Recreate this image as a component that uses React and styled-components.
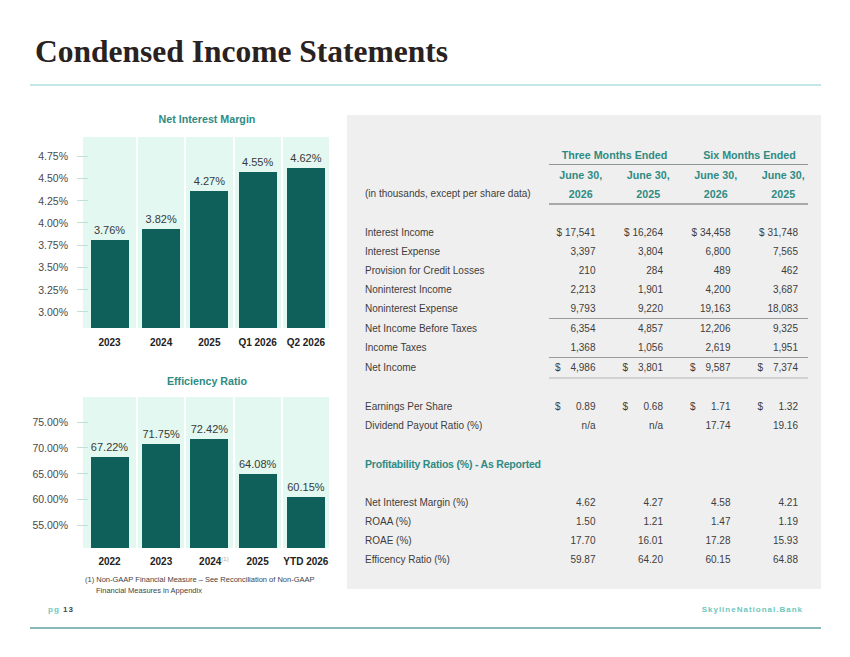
import React from 'react';
import styled, { createGlobalStyle } from 'styled-components';

const GlobalStyle = createGlobalStyle`
  html, body {
    margin: 0;
    padding: 0;
    background: #ffffff;
  }
  body {
    font-family: "Liberation Sans", Arial, sans-serif;
  }
`;

const TEAL = '#2e8b83';

// Page frame
const Page = styled.div`
  width: 850px;
  height: 657px;
  display: flex;
  flex-direction: column;
  overflow: hidden;
  background: #ffffff;
`;

const Title = styled.h1`
  margin: 0;
  padding: 36px 0 0 35px;
  font-family: "Liberation Serif", "Times New Roman", serif;
  font-weight: 700;
  font-size: 31.5px;
  line-height: 31px;
  color: #2a2121;
`;

const Rule = styled.div`
  height: 2px;
  margin: ${(p) => p.$mt}px 29px 0 30px;
  background: ${(p) => p.$color};
`;

const Body = styled.div`
  display: flex;
  gap: 18px;
  height: 484px;
  margin-top: 26px;
  padding-left: 25px;
`;

// Charts
const ChartColumn = styled.div`
  width: 304px;
  display: flex;
  flex-direction: column;
`;

const ChartTitle = styled.div`
  margin-top: ${(p) => p.$mt}px;
  padding-left: 60px;
  text-align: center;
  font-weight: 700;
  font-size: 10.7px;
  line-height: 14px;
  color: ${TEAL};
`;

const ChartRow = styled.div`
  display: flex;
  height: ${(p) => p.$h}px;
  margin-top: ${(p) => p.$mt}px;
`;

const Axis = styled.div`
  width: 58px;
  box-sizing: border-box;
  display: flex;
  flex-direction: column;
  justify-content: space-between;
  padding: ${(p) => p.$pt}px 0 ${(p) => p.$pb}px;
`;

const AxisLabel = styled.div`
  display: flex;
  align-items: center;
  justify-content: flex-end;
  height: 12px;
  font-size: 10.5px;
  color: #4a4a4a;

  &::after {
    content: '';
    position: relative;
    z-index: 1;
    width: 11px;
    height: 1px;
    margin: 0 -5px 0 9px;
    background: #c2e0d6;
  }
`;

const Plot = styled.div`
  flex: 1;
  display: grid;
  grid-template-columns: 53px repeat(4, 1fr);
  column-gap: 2px;
`;

const BarSlot = styled.div`
  display: flex;
  flex-direction: column;
  align-items: center;
  justify-content: flex-end;
  background: #e2f8f0;
`;

const BarValue = styled.span`
  margin-bottom: 3px;
  font-size: 11px;
  line-height: 13px;
  color: #3a3a3a;
`;

const Bar = styled.div`
  width: 38px;
  height: ${(p) => p.$h}px;
  background: #0f5f5a;
`;

const XLabels = styled.div`
  display: grid;
  grid-template-columns: 53px repeat(4, 1fr);
  column-gap: 2px;
  margin: ${(p) => p.$mt}px 0 0 58px;
`;

const XLabel = styled.div`
  text-align: center;
  white-space: nowrap;
  font-weight: 700;
  font-size: 10px;
  line-height: 14px;
  color: #222222;
`;

const Note = styled.sup`
  margin-right: -9px;
  font-weight: 400;
  font-size: 6px;
  line-height: 0;
  color: #a8a8a8;
`;

const Footnote = styled.div`
  margin-top: 5px;
  padding-left: 71px;
  text-indent: -11px;
  font-size: 7.5px;
  line-height: 11px;
  color: #444444;
`;

// Table panel
const Panel = styled.div`
  width: 474px;
  height: 474px;
  box-sizing: border-box;
  margin-top: 3px;
  padding: 31px 4px 0 18px;
  background: #f0efef;
`;

const Row = styled.div`
  display: grid;
  grid-template-columns: 182px repeat(4, 67.5px);
  align-items: center;
  height: ${(p) => p.$h || 19}px;
  margin-top: ${(p) => p.$mt || 0}px;
  font-size: 10px;
  color: #3d3d3d;
  white-space: nowrap;
`;

const Line = styled.div`
  width: 259px;
  height: ${(p) => p.$w}px;
  margin-left: 184px;
  background: ${(p) => p.$color};
`;

const Head = styled.div`
  grid-column: span ${(p) => p.$span || 1};
  text-align: center;
  font-weight: 700;
  font-size: 10.7px;
  color: ${TEAL};
`;

const Cell = styled.div`
  text-align: right;
  padding-right: 19px;
`;

const MoneyCell = styled(Cell)`
  display: flex;
  justify-content: space-between;
  padding-left: 8px;
`;

const Section = styled.div`
  grid-column: span 5;
  font-weight: 700;
  font-size: 10.5px;
  letter-spacing: -0.2px;
  color: ${TEAL};
`;

// Footer
const Footer = styled.div`
  display: flex;
  justify-content: space-between;
  margin-top: 9px;
  padding: 0 47px 0 48px;
  font-weight: 700;
  font-size: 8px;
  line-height: 10px;
  letter-spacing: 1px;
  color: #6cc8c0;
`;

const PageNo = styled.span`
  color: #3f4a4a;
`;

const nim = [
  ['2023', '3.76%', 88],
  ['2024', '3.82%', 99],
  ['2025', '4.27%', 137],
  ['Q1 2026', '4.55%', 156],
  ['Q2 2026', '4.62%', 160],
];

const eff = [
  ['2022', '67.22%', 91],
  ['2023', '71.75%', 104],
  ['2024', '72.42%', 109, true],
  ['2025', '64.08%', 74],
  ['YTD 2026', '60.15%', 51],
];

const Chart = ({ title, titleTop, rowTop, height, ticks, pt, pb, labelTop, data }) => (
  <>
    <ChartTitle $mt={titleTop}>{title}</ChartTitle>
    <ChartRow $mt={rowTop} $h={height}>
      <Axis $pt={pt} $pb={pb}>
        {ticks.map((t) => (
          <AxisLabel key={t}>{t}</AxisLabel>
        ))}
      </Axis>
      <Plot>
        {data.map(([label, value, h]) => (
          <BarSlot key={label}>
            <BarValue>{value}</BarValue>
            <Bar $h={h} />
          </BarSlot>
        ))}
      </Plot>
    </ChartRow>
    <XLabels $mt={labelTop}>
      {data.map(([label, , , note]) => (
        <XLabel key={label}>
          {label}
          {note && <Note>(1)</Note>}
        </XLabel>
      ))}
    </XLabels>
  </>
);

const topRows = [
  ['Interest Expense', '3,397', '3,804', '6,800', '7,565'],
  ['Provision for Credit Losses', '210', '284', '489', '462'],
  ['Noninterest Income', '2,213', '1,901', '4,200', '3,687'],
  ['Noninterest Expense', '9,793', '9,220', '19,163', '18,083'],
];

const midRows = [
  ['Net Income Before Taxes', '6,354', '4,857', '12,206', '9,325'],
  ['Income Taxes', '1,368', '1,056', '2,619', '1,951'],
];

const ratioRows = [
  ['ROAA (%)', '1.50', '1.21', '1.47', '1.19'],
  ['ROAE (%)', '17.70', '16.01', '17.28', '15.93'],
  ['Efficency Ratio (%)', '59.87', '64.20', '60.15', '64.88'],
];

const DataRow = ({ cells, mt }) => (
  <Row $mt={mt}>
    <div>{cells[0]}</div>
    {cells.slice(1).map((c, i) => (
      <Cell key={i}>{c}</Cell>
    ))}
  </Row>
);

const MoneyRow = ({ label, values, mt }) => (
  <Row $mt={mt}>
    <div>{label}</div>
    {values.map((v, i) => (
      <MoneyCell key={i}>
        <span>$</span>
        <span>{v}</span>
      </MoneyCell>
    ))}
  </Row>
);

const App = () => (
  <Page>
    <GlobalStyle />
    <Title>Condensed Income Statements</Title>
    <Rule $mt={17} $color="#c3e6e8" />

    <Body>
      <ChartColumn>
        <Chart
          title="Net Interest Margin"
          titleTop={0}
          rowTop={11}
          height={191}
          pt={13}
          pb={10}
          labelTop={8}
          ticks={['4.75%', '4.50%', '4.25%', '4.00%', '3.75%', '3.50%', '3.25%', '3.00%']}
          data={nim}
        />
        <Chart
          title="Efficiency Ratio"
          titleTop={24}
          rowTop={9}
          height={151}
          pt={19}
          pb={17}
          labelTop={7}
          ticks={['75.00%', '70.00%', '65.00%', '60.00%', '55.00%']}
          data={eff}
        />
        <Footnote>
          (1) Non-GAAP Financial Measure – See Reconciliation of Non-GAAP
          <br />
          Financial Measures in Appendix
        </Footnote>
      </ChartColumn>

      <Panel>
        <Row $h={18}>
          <div />
          <Head $span={2}>Three Months Ended</Head>
          <Head $span={2}>Six Months Ended</Head>
        </Row>
        <Line $w={1} $color="#8e9796" />
        <Row>
          <div />
          <Head>June 30,</Head>
          <Head>June 30,</Head>
          <Head>June 30,</Head>
          <Head>June 30,</Head>
        </Row>
        <Row>
          <div>(in thousands, except per share data)</div>
          <Head>2026</Head>
          <Head>2025</Head>
          <Head>2026</Head>
          <Head>2025</Head>
        </Row>
        <Line $w={2} $color="#a9a9a9" />

        <DataRow mt={18} cells={['Interest Income', '$ 17,541', '$ 16,264', '$ 34,458', '$ 31,748']} />
        {topRows.map((r) => (
          <DataRow key={r[0]} cells={r} />
        ))}
        <Line $w={1} $color="#9b9b9b" />
        {midRows.map((r) => (
          <DataRow key={r[0]} cells={r} />
        ))}
        <Line $w={1} $color="#9b9b9b" />
        <MoneyRow label="Net Income" values={['4,986', '3,801', '9,587', '7,374']} />
        <Line $w={2} $color="#d2d2d2" />

        <MoneyRow mt={17.5} label="Earnings Per Share" values={['0.89', '0.68', '1.71', '1.32']} />
        <DataRow cells={['Dividend Payout Ratio (%)', 'n/a', 'n/a', '17.74', '19.16']} />

        <Row $mt={20}>
          <Section>Profitability Ratios (%) - As Reported</Section>
        </Row>

        <DataRow mt={19.7} cells={['Net Interest Margin (%)', '4.62', '4.27', '4.58', '4.21']} />
        {ratioRows.map((r) => (
          <DataRow key={r[0]} cells={r} />
        ))}
      </Panel>
    </Body>

    <Footer>
      <span>
        pg <PageNo>13</PageNo>
      </span>
      <span>SkylineNational.Bank</span>
    </Footer>
    <Rule $mt={12} $color="#8ab8ba" />
  </Page>
);

export default App;
